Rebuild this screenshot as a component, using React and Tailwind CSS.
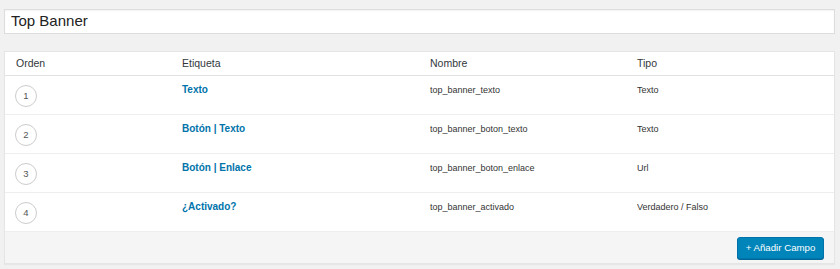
const campos = [
  { orden: 1, etiqueta: "Texto", nombre: "top_banner_texto", tipo: "Texto" },
  { orden: 2, etiqueta: "Botón | Texto", nombre: "top_banner_boton_texto", tipo: "Texto" },
  { orden: 3, etiqueta: "Botón | Enlace", nombre: "top_banner_boton_enlace", tipo: "Url" },
  { orden: 4, etiqueta: "¿Activado?", nombre: "top_banner_activado", tipo: "Verdadero / Falso" },
];

const cols = "grid grid-cols-[166px_248px_207px_1fr] pl-[11px]";

function FilaCampo({ campo }) {
  return (
    <div className={`${cols} h-[39px] items-start border-b border-[#eeeeee] pt-[7px]`}>
      <div className="flex h-[22px] w-[22px] mt-[2px] -ml-[1px] items-center justify-center rounded-full border border-[#cccccc] bg-white text-[9.5px] text-[#555]">
        {campo.orden}
      </div>
      <a href="#" className="text-[10px] font-bold leading-[14px] text-[#0073aa]">
        {campo.etiqueta}
      </a>
      <span className="text-[9px] leading-[14px] text-[#333]">{campo.nombre}</span>
      <span className="text-[9px] leading-[14px] text-[#333]">{campo.tipo}</span>
    </div>
  );
}

export default function App() {
  return (
    <div className="min-h-[269px] w-[840px] bg-[#f1f1f1] pl-[4px] pr-[5px] pt-[9px] font-['Liberation_Sans',Arial,sans-serif]">
      <div className="flex h-[25px] items-center border border-[#dddddd] bg-white pl-[6px] text-[15px] text-[#222] shadow-[inset_0_1px_2px_rgba(0,0,0,0.05)]">
        Top Banner
      </div>

      <div className="mt-[17px] w-[831px] border border-[#e5e5e5] bg-white shadow-[0_1px_1px_rgba(0,0,0,0.04)]">
        <div className={`${cols} h-[24px] items-center border-b border-[#e1e1e1] text-[10.5px] text-[#32373c]`}>
          <span>Orden</span>
          <span>Etiqueta</span>
          <span>Nombre</span>
          <span>Tipo</span>
        </div>

        {campos.map((c) => (
          <FilaCampo key={c.orden} campo={c} />
        ))}

        <div className="flex h-[31px] items-start justify-end bg-[#f5f5f5] pr-[10px] pt-[5px]">
          <button className="h-[22px] w-[87px] rounded-[3px] border border-[#0073aa] bg-[#0085ba] text-[9.7px] text-white shadow-[0_1px_0_#006799]">
            + Añadir Campo
          </button>
        </div>
      </div>
    </div>
  );
}
